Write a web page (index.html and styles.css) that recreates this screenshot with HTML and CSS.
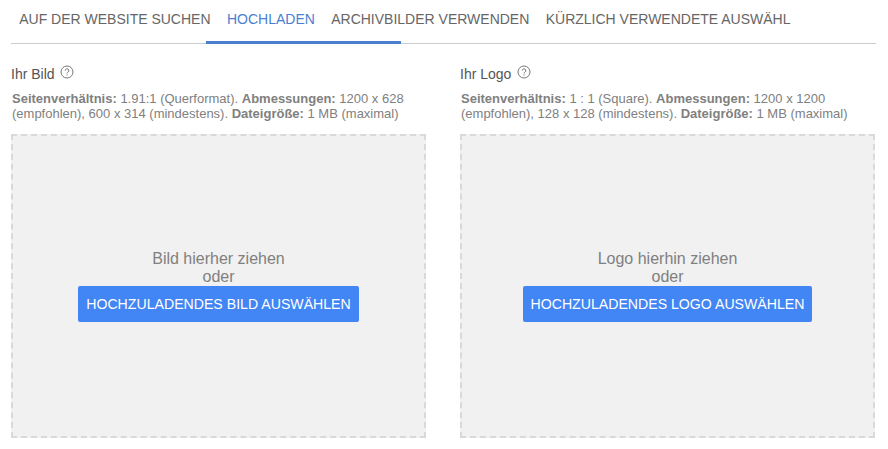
FILE: index.html
```html
<!DOCTYPE html>
<html lang="de">
<head>
    <meta charset="UTF-8">
    <meta name="viewport" content="width=device-width, initial-scale=1.0">
    <title>Hochladen</title>
    <link rel="stylesheet" href="styles.css">
</head>
<body>
    <div class="tabs">
        <div class="tab">AUF DER WEBSITE SUCHEN</div>
        <div class="tab active">HOCHLADEN</div>
        <div class="tab">ARCHIVBILDER VERWENDEN</div>
        <div class="tab">KÜRZLICH VERWENDETE AUSWÄHL</div>
        <div class="ink-bar"></div>
    </div>
    <div class="columns">
        <div class="column">
            <div class="title">Ihr Bild
                <svg class="help" width="14" height="14" viewBox="0 0 14 14"><circle cx="7" cy="7" r="6" fill="none" stroke="#777" stroke-width="1"/><path d="M5.2 5.6a1.8 1.8 0 1 1 2.7 1.5c-.6.4-.9.7-.9 1.4" fill="none" stroke="#777" stroke-width="1"/><rect x="6.5" y="9.5" width="1" height="1" fill="#777"/></svg>
            </div>
            <p class="info"><b>Seitenverhältnis:</b> 1.91:1 (Querformat). <b>Abmessungen:</b> 1200 x 628 (empfohlen), 600 x 314 (mindestens). <b>Dateigröße:</b> 1 MB (maximal)</p>
            <div class="dropzone">
                <div class="drop-text">Bild hierher ziehen</div>
                <div class="drop-text">oder</div>
                <button class="upload">HOCHZULADENDES BILD AUSWÄHLEN</button>
            </div>
        </div>
        <div class="column">
            <div class="title">Ihr Logo
                <svg class="help" width="14" height="14" viewBox="0 0 14 14"><circle cx="7" cy="7" r="6" fill="none" stroke="#777" stroke-width="1"/><path d="M5.2 5.6a1.8 1.8 0 1 1 2.7 1.5c-.6.4-.9.7-.9 1.4" fill="none" stroke="#777" stroke-width="1"/><rect x="6.5" y="9.5" width="1" height="1" fill="#777"/></svg>
            </div>
            <p class="info"><b>Seitenverhältnis:</b> 1 : 1 (Square). <b>Abmessungen:</b> 1200 x 1200 (empfohlen), 128 x 128 (mindestens). <b>Dateigröße:</b> 1 MB (maximal)</p>
            <div class="dropzone">
                <div class="drop-text">Logo hierhin ziehen</div>
                <div class="drop-text">oder</div>
                <button class="upload">HOCHZULADENDES LOGO AUSWÄHLEN</button>
            </div>
        </div>
    </div>
</body>
</html>
```

FILE: styles.css
```css
body {
    margin: 0;
    height: 449px;
    overflow: hidden;
    background-color: #fff;
    font-family: "Liberation Sans", Arial, sans-serif;
    color: #757575;
}
.tabs {
    position: relative;
    display: flex;
    height: 43px;
    margin: 0 12px 0 11px;
    border-bottom: 1px solid #ccc;
}
.tab {
    padding: 0 8.2px;
    font-size: 14px;
    line-height: 39px;
    color: #666;
    white-space: nowrap;
}
.tab.active {
    color: #4a7fd0;
}
.ink-bar {
    position: absolute;
    left: 195px;
    top: 41px;
    width: 195px;
    height: 3px;
    background-color: #4a7fd0;
}
.columns {
    display: flex;
    gap: 34px;
    margin-left: 11px;
}
.column {
    width: 415px;
}
.title {
    margin-top: 20px;
    height: 20px;
    font-size: 14px;
    line-height: 20px;
    color: #555;
}
.help {
    margin-left: 2px;
    vertical-align: 0;
}
.info {
    margin: 7px 0 13px 1px;
    font-size: 13px;
    line-height: 15px;
    color: #808080;
    width: 410px;
}
.dropzone {
    box-sizing: border-box;
    height: 304px;
    padding-top: 114px;
    background-color: #f1f1f1;
    border: 2px dashed #d9d9d9;
    text-align: center;
}
.drop-text {
    font-size: 16px;
    line-height: 18px;
    color: #808080;
}
.upload {
    height: 36px;
    padding: 0 8px;
    border: none;
    border-radius: 2px;
    background-color: #4285f4;
    color: #fff;
    font-family: inherit;
    font-size: 14.13px;
}
```
